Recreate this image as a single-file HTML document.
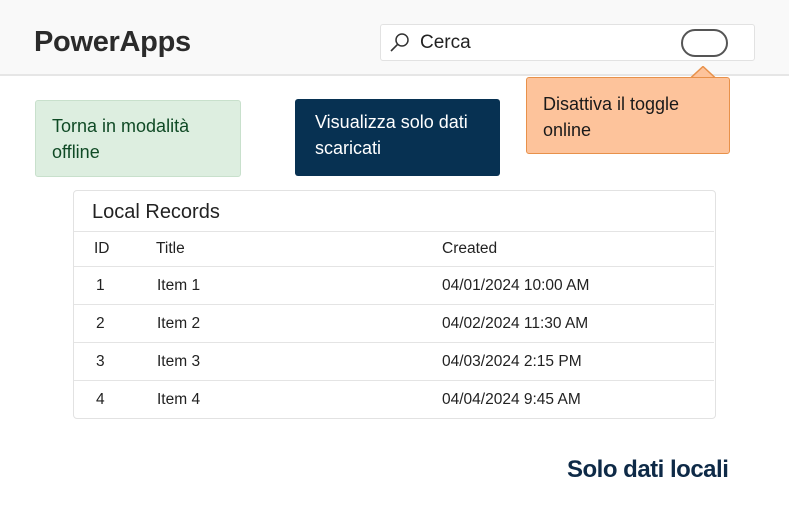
<!DOCTYPE html>
<html><head><meta charset="utf-8"><style>
*{margin:0;padding:0;box-sizing:border-box}
body{width:789px;height:526px;background:#fff;font-family:"Liberation Sans",sans-serif;color:#222;position:relative;overflow:hidden}
.a{position:absolute}
.hdr{left:0;top:0;width:789px;height:76px;background:#f9f9f9;border-bottom:2px solid #e6e6e6}
.logo{left:34px;top:26px;font-size:29px;font-weight:bold;letter-spacing:-0.3px;color:#2b2b2b}
.search{left:380px;top:24px;width:375px;height:37px;background:#fff;border:1px solid #e2e2e2;border-radius:3px}
.tog{left:681px;top:29px;width:47px;height:28px;border:2px solid #555;border-radius:14px;background:#fff}
.call{left:526px;top:77px;width:204px;height:77px;background:#fdc39b;border:1.5px solid #e8914a;border-radius:3px;font-size:18px;line-height:26px;padding:13px 0 0 16px;color:#1a1a1a}
.green{left:35px;top:100px;width:206px;height:77px;background:#ddeee0;border:1.5px solid #c8e0cc;border-radius:3px;color:#0f4a25;font-size:18px;line-height:26px;padding:12px 0 0 16px}
.navy{left:295px;top:99px;width:205px;height:77px;background:#073152;border-radius:3px;color:#fff;font-size:18px;line-height:26px;padding:10px 0 0 20px}
.tbl{left:73px;top:190px;width:643px;height:229px;border:1.5px solid #e2e2e2;border-radius:4px}
.row{position:absolute;left:0;width:640px;border-top:1.5px solid #e4e4e4;font-size:15.5px}
.row span{position:absolute}
</style></head><body>
<div class="a hdr"></div>
<div class="a logo">PowerApps</div>
<div class="a search"></div>
<svg class="a" style="left:388px;top:31px" width="24" height="24" viewBox="0 0 24 24"><circle cx="14" cy="9" r="6" fill="none" stroke="#333" stroke-width="1.5"/><line x1="9.8" y1="13.2" x2="3" y2="20" stroke="#333" stroke-width="1.6"/></svg>
<div class="a" style="left:420px;top:32px;font-size:19px;color:#222">Cerca</div>
<div class="a tog"></div>
<svg class="a" style="left:690px;top:66px" width="28" height="13" viewBox="0 0 28 13"><path d="M0 12.5 L13 0.5 L26 12.5" fill="#fdc39b" stroke="#e8914a" stroke-width="1.5"/><rect x="1" y="11" width="24" height="3" fill="#fdc39b"/></svg>
<div class="a call">Disattiva il toggle<br>online</div>
<div class="a green">Torna in modalità<br>offline</div>
<div class="a navy">Visualizza solo dati<br>scaricati</div>
<div class="a tbl">
<div class="a" style="left:18px;top:10px;font-size:20px;color:#222">Local Records</div>
<div class="row" style="top:40px;height:35px"><span style="left:20px;top:8px">ID</span><span style="left:82px;top:8px">Title</span><span style="left:368px;top:8px">Created</span></div>
<div class="row" style="top:75px;height:38px"><span style="left:22px;top:10px">1</span><span style="left:83px;top:10px">Item 1</span><span style="left:368px;top:10px">04/01/2024 10:00 AM</span></div>
<div class="row" style="top:113px;height:38px"><span style="left:22px;top:10px">2</span><span style="left:83px;top:10px">Item 2</span><span style="left:368px;top:10px">04/02/2024 11:30 AM</span></div>
<div class="row" style="top:151px;height:38px"><span style="left:22px;top:10px">3</span><span style="left:83px;top:10px">Item 3</span><span style="left:368px;top:10px">04/03/2024 2:15 PM</span></div>
<div class="row" style="top:189px;height:38px"><span style="left:22px;top:10px">4</span><span style="left:83px;top:10px">Item 4</span><span style="left:368px;top:10px">04/04/2024 9:45 AM</span></div>
</div>
<div class="a" style="left:567px;top:456px;font-size:24px;font-weight:bold;color:#0e2a47;letter-spacing:-0.5px">Solo dati locali</div>
</body></html>
